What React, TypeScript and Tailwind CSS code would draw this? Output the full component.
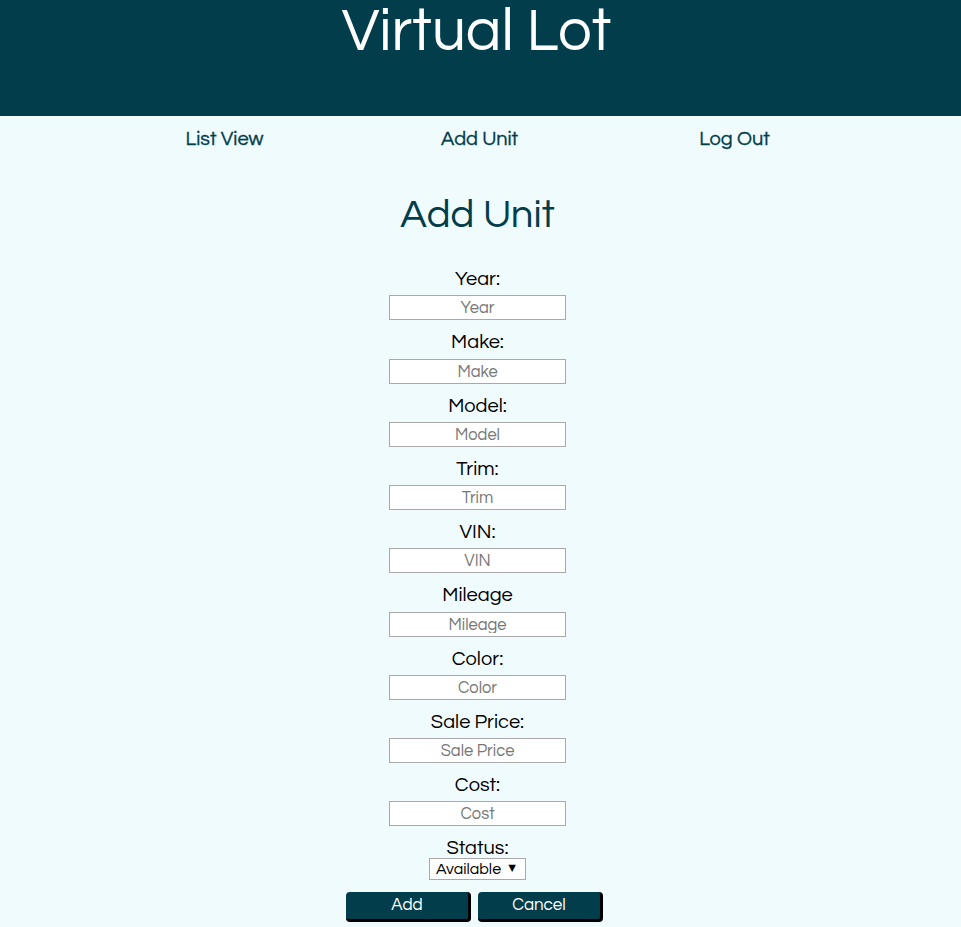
const fields = [
  { label: "Year:", placeholder: "Year" },
  { label: "Make:", placeholder: "Make" },
  { label: "Model:", placeholder: "Model" },
  { label: "Trim:", placeholder: "Trim" },
  { label: "VIN:", placeholder: "VIN" },
  { label: "Mileage", placeholder: "Mileage" },
  { label: "Color:", placeholder: "Color" },
  { label: "Sale Price:", placeholder: "Sale Price" },
  { label: "Cost:", placeholder: "Cost" },
];

function NavBar() {
  const links = ["List View", "Add Unit", "Log Out"];
  return (
    <nav className="mx-auto grid w-[765px] -translate-x-[1px] grid-cols-3 pt-[11px]">
      {links.map((link) => (
        <a
          key={link}
          href="#"
          className="text-center text-[20px] leading-[24px] text-[#023d4b] [-webkit-text-stroke:0.3px_#023d4b]"
        >
          {link}
        </a>
      ))}
    </nav>
  );
}

function AddUnitForm() {
  return (
    <form className="flex flex-col items-center pr-[6px]">
      {fields.map((f) => (
        <div key={f.label} className="flex flex-col items-center pb-[11px]">
          <label className="text-[20px] leading-[22.25px] text-black">
            {f.label}
          </label>
          <input
            type="text"
            placeholder={f.placeholder}
            className="mt-[5px] h-[25px] w-[177px] border border-[#a9a9a9] bg-white text-center text-[16.5px] text-black placeholder:text-[#777]"
          />
        </div>
      ))}

      <label className="text-[20px] leading-[22px] text-black">Status:</label>
      <div className="-mt-[1px] flex h-[22px] w-[97px] items-center border border-[#a9a9a9] bg-white pl-[6px] text-[16px] text-black">
        <span>Available</span>
        <span className="ml-[7px] text-[11px]">▼</span>
      </div>

      <div className="mt-[12px] flex gap-[7px] pr-[6px]">
        <button
          type="button"
          className="h-[30px] w-[125px] rounded-[4px] border-r-[3px] border-b-[3px] border-black bg-[#023d4b] text-[17px] text-white"
        >
          Add
        </button>
        <button
          type="button"
          className="h-[30px] w-[125px] rounded-[4px] border-r-[3px] border-b-[3px] border-black bg-[#023d4b] text-[17px] text-white"
        >
          Cancel
        </button>
      </div>
    </form>
  );
}

export default function App() {
  return (
    <div className="min-h-screen bg-[#f0fbfe] font-['Questrial','Lato',sans-serif]">
      <header className="h-[116px] bg-[#023d4b] pr-[8px] text-center">
        <h1 className="text-[60px] leading-[64px] text-white">Virtual Lot</h1>
      </header>

      <NavBar />

      <h2 className="mt-[40px] mb-[29px] pr-[6px] text-center text-[40px] leading-[48px] text-[#023d4b]">
        Add Unit
      </h2>

      <AddUnitForm />
    </div>
  );
}
